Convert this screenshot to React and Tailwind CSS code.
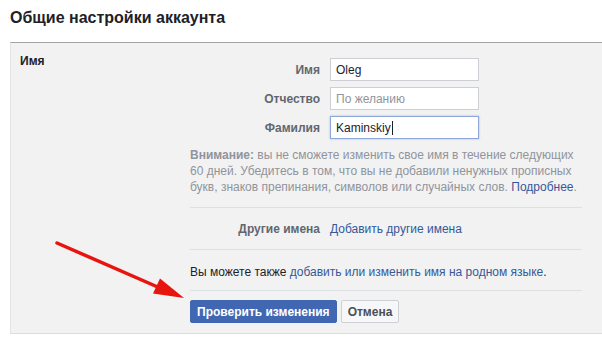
export default function App() {
  const font = { fontFamily: '"Liberation Sans", Arial, sans-serif' };
  return (
    <div className="relative w-[602px] h-[337px] bg-white overflow-hidden" style={font}>
      <div className="pl-[10px] pt-[8px] h-[42px]">
        <h1 className="text-[16px] leading-[20px] font-bold text-[#1d2129]">Общие настройки аккаунта</h1>
      </div>
      <div className="ml-[10px] flex border-t border-t-[#a3a3a3] border-l border-l-[#e4e4e4] border-b border-b-[#dcdcdc] bg-[#f2f2f2] h-[292px]">
        <div className="w-[179px] pl-[9px] pt-[10px]">
          <div className="text-[12px] leading-[16px] font-bold text-[#1d2129]">Имя</div>
        </div>
        <div className="w-[402px] pt-[15px] flex flex-col text-[12px]">
          <div className="flex flex-col gap-[6px]">
            <div className="flex items-center h-[23px]">
              <div className="w-[140px] text-right font-bold text-[#606770] pr-[10px]">Имя</div>
              <div className="w-[149px] h-[23px] bg-white border border-[#ccd0d5] flex items-center px-[5px] text-[#1d2129]">Oleg</div>
            </div>
            <div className="flex items-center h-[23px]">
              <div className="w-[140px] text-right font-bold text-[#606770] pr-[10px]">Отчество</div>
              <div className="w-[149px] h-[23px] bg-white border border-[#ccd0d5] flex items-center px-[5px] text-[#90949c]">По желанию</div>
            </div>
            <div className="flex items-center h-[23px]">
              <div className="w-[140px] text-right font-bold text-[#606770] pr-[10px]">Фамилия</div>
              <div className="w-[149px] h-[23px] bg-white border border-[#8fa8dc] shadow-[0_0_2px_rgba(66,103,178,0.4)] flex items-center px-[5px] text-[#1d2129]">
                Kaminskiy<span className="inline-block w-px h-[14px] bg-[#1d2129] ml-[1px]"></span>
              </div>
            </div>
          </div>
          <p className="mt-[8px] leading-[16px] text-[#90949c] pr-[12px]">
            <span className="font-bold">Внимание:</span> вы не сможете изменить свое имя в течение следующих 60 дней. Убедитесь в том, что вы не добавили ненужных прописных букв, знаков препинания, символов или случайных слов. <span className="text-[#365899]">Подробнее</span>.
          </p>
          <div className="mt-[12px] h-px bg-[#dddfe2] mr-[10px]"></div>
          <div className="flex items-center h-[41px]">
            <div className="w-[140px] text-right font-bold text-[#606770] pr-[10px]">Другие имена</div>
            <div className="text-[#365899]">Добавить другие имена</div>
          </div>
          <div className="h-px bg-[#dddfe2] mr-[10px]"></div>
          <div className="pt-[14px] pb-[10px] leading-[16px] text-[#1d2129]">
            Вы можете также <span className="text-[#365899]">добавить или изменить имя на родном языке</span>.
          </div>
          <div className="h-px bg-[#dddfe2] mr-[10px]"></div>
          <div className="mt-[9px] flex gap-[4px]">
            <div className="h-[23px] px-[6px] flex items-center bg-[#4267b2] border border-[#4267b2] rounded-[2px] text-white font-bold">Проверить изменения</div>
            <div className="h-[23px] px-[6px] flex items-center bg-[#f6f7f9] border border-[#ced0d4] rounded-[2px] text-[#4b4f56] font-bold">Отмена</div>
          </div>
        </div>
      </div>
      <svg className="absolute left-0 top-0 pointer-events-none" width="602" height="337">
        <line x1="57" y1="243" x2="160" y2="288" stroke="#e8140e" strokeWidth="3.5" strokeLinecap="round" />
        <polygon points="184,298 153,293.5 160,278.5" fill="#e8140e" />
      </svg>
    </div>
  );
}
